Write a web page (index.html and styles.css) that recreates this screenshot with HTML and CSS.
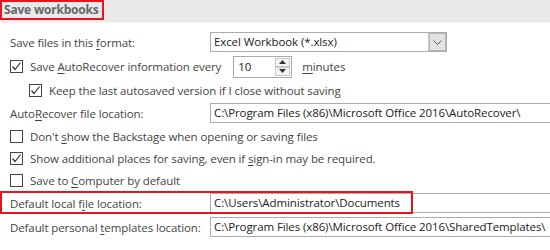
FILE: index.html
```html
<!DOCTYPE html>
<html lang="en">
<head>
    <meta charset="UTF-8">
    <meta name="viewport" content="width=device-width, initial-scale=1.0">
    <title>Excel Options - Save</title>
    <link rel="stylesheet" href="styles.css">
</head>
<body>
    <div class="section-head">
        <span class="section-title">Save workbooks</span>
    </div>

    <div class="options">
        <div class="row field">
            <label class="label">Save files in this <u>f</u>ormat:</label>
            <div class="select">
                <span class="select-text">Excel Workbook (*.xlsx)</span>
                <span class="select-btn">
                    <svg width="9" height="5" viewBox="0 0 9 5"><polyline points="0.5,0.5 4.5,4.5 8.5,0.5" fill="none" stroke="#555" stroke-width="1"/></svg>
                </span>
            </div>
        </div>

        <div class="row spin-row">
            <span class="check checked">
                <svg width="11" height="11" viewBox="0 0 11 11"><polyline points="1.5,5.5 4,8.5 9.5,1.5" fill="none" stroke="#333" stroke-width="1.2"/></svg>
            </span>
            <span class="check-text">Save <u>A</u>utoRecover information every</span>
            <div class="spinner">
                <span class="spin-value">10</span>
                <span class="spin-btns">
                    <span class="spin-btn"><svg width="7" height="4" viewBox="0 0 7 4"><polygon points="3.5,0 7,4 0,4" fill="#333"/></svg></span>
                    <span class="spin-btn"><svg width="7" height="4" viewBox="0 0 7 4"><polygon points="0,0 7,0 3.5,4" fill="#333"/></svg></span>
                </span>
            </div>
            <span class="unit"><u>m</u>inutes</span>
        </div>

        <div class="row check-row indent">
            <span class="check checked">
                <svg width="11" height="11" viewBox="0 0 11 11"><polyline points="1.5,5.5 4,8.5 9.5,1.5" fill="none" stroke="#333" stroke-width="1.2"/></svg>
            </span>
            <span class="check-text">Keep the last autosaved version if I close without saving</span>
        </div>

        <div class="row field">
            <label class="label">Auto<u>R</u>ecover file location:</label>
            <div class="text-input">C:\Program Files (x86)\Microsoft Office 2016\AutoRecover\</div>
        </div>

        <div class="row check-row">
            <span class="check"></span>
            <span class="check-text">Don't <u>s</u>how the Backstage when opening or saving files</span>
        </div>

        <div class="row check-row">
            <span class="check checked">
                <svg width="11" height="11" viewBox="0 0 11 11"><polyline points="1.5,5.5 4,8.5 9.5,1.5" fill="none" stroke="#333" stroke-width="1.2"/></svg>
            </span>
            <span class="check-text">Show additional places for saving, even if <u>s</u>ign-in may be required.</span>
        </div>

        <div class="row check-row">
            <span class="check"></span>
            <span class="check-text">Save to <u>C</u>omputer by default</span>
        </div>

        <div class="row field highlight-row">
            <label class="label">Default local f<u>i</u>le location:</label>
            <div class="text-input">C:\Users\Administrator\Documents</div>
            <span class="highlight"></span>
        </div>

        <div class="row field">
            <label class="label">Default personal <u>t</u>emplates location:</label>
            <div class="text-input">C:\Program Files (x86)\Microsoft Office 2016\SharedTemplates\</div>
        </div>
    </div>
</body>
</html>
```

FILE: styles.css
```css
body {
    margin: 0;
    width: 550px;
    height: 250px;
    overflow: hidden;
    background: #fff;
    font-family: "Open Sans", "Noto Sans", sans-serif;
    font-size: 11.5px;
    letter-spacing: -0.1px;
    color: #444;
}

u {
    text-decoration-thickness: 1px;
    text-underline-offset: 2px;
}

.section-head {
    height: 22px;
    background: #e9e9e9;
    border-bottom: 1px solid #f3f3f3;
}

.section-title {
    display: inline-block;
    box-sizing: border-box;
    height: 20px;
    padding: 0 3px 0 2px;
    border: 2px solid #e8141b;
    font-weight: bold;
    font-size: 12px;
    line-height: 15px;
    letter-spacing: -0.2px;
    color: #666;
}

.options {
    padding-top: 7px;
}

.row {
    display: flex;
    align-items: center;
    white-space: nowrap;
}

.field {
    height: 24px;
}

.check-row {
    height: 22px;
}

.spin-row {
    height: 25px;
}

.label {
    width: 200px;
    padding-left: 10px;
    flex: none;
}

.check {
    box-sizing: border-box;
    width: 13px;
    height: 13px;
    margin-left: 10px;
    margin-right: 7px;
    border: 1px solid #444;
    background: #fff;
    display: flex;
    align-items: center;
    justify-content: center;
    flex: none;
}

.indent .check {
    margin-left: 29px;
}

.select {
    box-sizing: border-box;
    display: flex;
    width: 237px;
    height: 20px;
    border: 1px solid #ababab;
}

.select-text {
    flex: 1;
    padding-left: 3px;
    line-height: 18px;
    color: #222;
}

.select-btn {
    width: 17px;
    background: #e3e3e3;
    border-left: 1px solid #c8c8c8;
    box-shadow: inset 0 0 0 1px #b8b8b8;
    display: flex;
    align-items: center;
    justify-content: center;
}

.spinner {
    box-sizing: border-box;
    display: flex;
    width: 59px;
    height: 22px;
    margin-left: 12px;
    border: 1px solid #ababab;
}

.spin-value {
    flex: 1;
    padding-left: 4px;
    line-height: 20px;
    color: #222;
}

.spin-btns {
    display: flex;
    flex-direction: column;
    width: 15px;
    padding: 1px;
}

.spin-btn {
    flex: 1;
    display: flex;
    align-items: center;
    justify-content: center;
    border: 1px solid #c8c8c8;
    background: #f2f2f2;
}

.unit {
    margin-left: 10px;
}

.text-input {
    box-sizing: border-box;
    height: 20px;
    flex: 1;
    margin-right: -10px;
    padding-left: 3px;
    line-height: 18px;
    border: 1px solid #ababab;
    color: #222;
}

.highlight-row {
    position: relative;
}

.highlight {
    position: absolute;
    left: 0;
    top: 0;
    width: 413px;
    height: 23px;
    box-sizing: border-box;
    border: 2px solid #e8141b;
}
```
